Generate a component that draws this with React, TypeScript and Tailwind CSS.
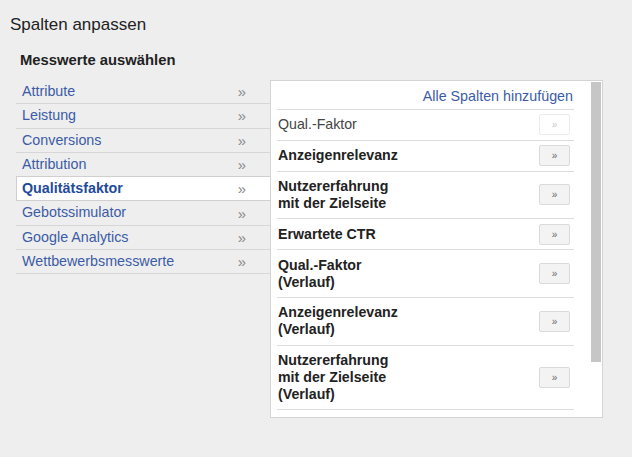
import React from "react";

const leftItems = [
  "Attribute",
  "Leistung",
  "Conversions",
  "Attribution",
  "Qualitätsfaktor",
  "Gebotssimulator",
  "Google Analytics",
  "Wettbewerbsmesswerte",
];

const rows: { lines: string[]; disabled?: boolean }[] = [
  { lines: ["Qual.-Faktor"], disabled: true },
  { lines: ["Anzeigenrelevanz"] },
  { lines: ["Nutzererfahrung", "mit der Zielseite"] },
  { lines: ["Erwartete CTR"] },
  { lines: ["Qual.-Faktor", "(Verlauf)"] },
  { lines: ["Anzeigenrelevanz", "(Verlauf)"] },
  { lines: ["Nutzererfahrung", "mit der Zielseite", "(Verlauf)"] },
];

export default function App() {
  return (
    <div
      className="w-[632px] h-[457px] bg-[#eeeeee] overflow-hidden"
      style={{ fontFamily: '"Liberation Sans", Arial, sans-serif' }}
    >
      <div className="pl-[10px] pt-[15px] h-[35px] text-[17px] leading-[20px] text-[#222]">
        Spalten anpassen
      </div>
      <div className="pl-[20px] mt-[16px] h-[18px] text-[14.8px] leading-[18px] font-bold text-[#222]">
        Messwerte auswählen
      </div>
      <div className="flex mt-[11px] pl-[16px]">
        <div className="w-[254px] flex flex-col">
          {leftItems.map((item) => {
            const sel = item === "Qualitätsfaktor";
            return (
              <div
                key={item}
                className={
                  sel
                    ? "h-[24.3px] box-border flex items-center justify-between pl-[5px] pr-[24px] bg-white border-l border-b border-[#cfcfcf] shadow-[0_-1px_0_#cfcfcf]"
                    : "h-[24.3px] box-border flex items-center justify-between pl-[6px] pr-[24px] border-b border-[#d6d6d6]"
                }
              >
                <span
                  className={
                    sel
                      ? "text-[14.3px] font-bold text-[#1f4b9c]"
                      : "text-[14.3px] text-[#3b5ba6]"
                  }
                >
                  {item}
                </span>
                <span className="text-[15px] text-[#8a8a8a] leading-none">»</span>
              </div>
            );
          })}
        </div>
        <div className="relative w-[333px] h-[338px] box-border bg-white border border-[#d4d4d4] pl-[6px] pr-[28px]">
          <div className="h-[29px] box-border border-b border-[#dcdcdc] pt-[7px] text-right text-[14.3px] leading-[17px] text-[#3b5ba6] pr-px">
            Alle Spalten hinzufügen
          </div>
          {rows.map((r, i) => (
            <div
              key={i}
              className="flex items-center justify-between border-b border-[#dcdcdc] pl-px pr-[4px]"
            >
              <div
                className={
                  r.disabled
                    ? "py-[6.4px] text-[14.2px] leading-[17px] text-[#444]"
                    : "py-[6.4px] text-[14.2px] leading-[17px] font-bold text-[#222]"
                }
              >
                {r.lines.map((l) => (
                  <div key={l}>{l}</div>
                ))}
              </div>
              <div
                className={
                  r.disabled
                    ? "w-[31px] h-[21px] box-border flex items-center justify-center rounded-[2px] border border-[#ececec] bg-white text-[10px] text-[#c8c8c8]"
                    : "w-[31px] h-[21px] box-border flex items-center justify-center rounded-[2px] border border-[#dadada] bg-[#f3f3f3] text-[10px] text-[#666]"
                }
              >
                »
              </div>
            </div>
          ))}
          <div className="absolute right-px top-px w-[10px] h-[280px] bg-[#c6c6c6]" />
        </div>
      </div>
    </div>
  );
}
